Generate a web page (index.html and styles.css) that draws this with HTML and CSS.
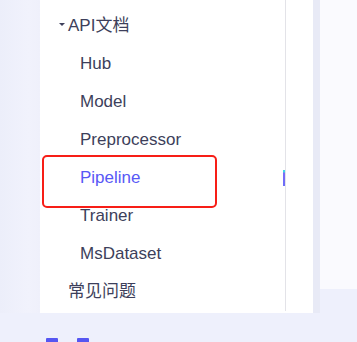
FILE: index.html
```html
<!DOCTYPE html>
<html lang="zh">

<head>
	<meta charset="utf-8" />
	<title>API文档</title>
	<link rel="stylesheet" href="styles.css">
</head>

<body>
	<div class="page">
		<div class="gutter"></div>
		<aside class="sidebar">
			<nav class="nav">
				<ul class="menu">
					<li class="group"><span class="caret"></span>API文档</li>
					<li class="sub">Hub</li>
					<li class="sub">Model</li>
					<li class="sub">Preprocessor</li>
					<li class="sub active">Pipeline</li>
					<li class="sub">Trainer</li>
					<li class="sub">MsDataset</li>
					<li class="top">常见问题</li>
				</ul>
				<div class="highlight"></div>
				<div class="scroll-mark"></div>
			</nav>
		</aside>
		<div class="spacer"></div>
		<main class="content"></main>
	</div>
	<div class="marks">
		<span class="mark"></span>
		<span class="mark"></span>
	</div>
</body>

</html>
```

FILE: styles.css
```css
body {
	margin: 0;
	background: #eef0fc;
	font-family: "Liberation Sans", Arial, "Noto Sans CJK SC", sans-serif;
	overflow: hidden;
}

.page {
	display: flex;
	align-items: flex-start;
}

.gutter {
	width: 40px;
	height: 313px;
	background: linear-gradient(90deg, #eceefa 0%, #f1f2fc 70%, #eff0fb 100%);
}

.sidebar {
	width: 273px;
	height: 313px;
	background: #ffffff;
}

.nav {
	position: relative;
	width: 245px;
	height: 311px;
	border-right: 1px solid #e3e3e8;
}

.menu {
	list-style: none;
	margin: 0;
	padding: 7px 0 0;
	font-size: 17px;
	line-height: 38px;
	color: #3d3f5b;
}

.group {
	padding-left: 19px;
}

.caret {
	display: inline-block;
	width: 0;
	height: 0;
	border-left: 3px solid transparent;
	border-right: 3px solid transparent;
	border-top: 3px solid #3d3f5b;
	margin-right: 3px;
	vertical-align: 5px;
}

.sub {
	padding-left: 40px;
}

.top {
	padding-left: 28px;
}

.active {
	color: #5858f6;
}

.highlight {
	position: absolute;
	left: 2px;
	top: 155px;
	width: 175px;
	height: 53px;
	box-sizing: border-box;
	border: 2px solid #f71e17;
	border-radius: 5px;
}

.scroll-mark {
	position: absolute;
	left: 243px;
	top: 170px;
	width: 2px;
	height: 16px;
	background: linear-gradient(180deg, #3fd8e6 0, #3fd8e6 2px, #7a6cf7 3px, #6b6df8 100%);
}

.spacer {
	width: 7px;
	height: 313px;
	background: #e8eaf6;
}

.content {
	flex: 1;
	height: 289px;
	background: #fafafe;
}

.marks {
	display: flex;
	gap: 19px;
	padding-left: 46px;
	margin-top: 25px;
}

.mark {
	width: 12px;
	height: 6px;
	background: #5656f2;
	border-radius: 1px 1px 0 0;
}
```
